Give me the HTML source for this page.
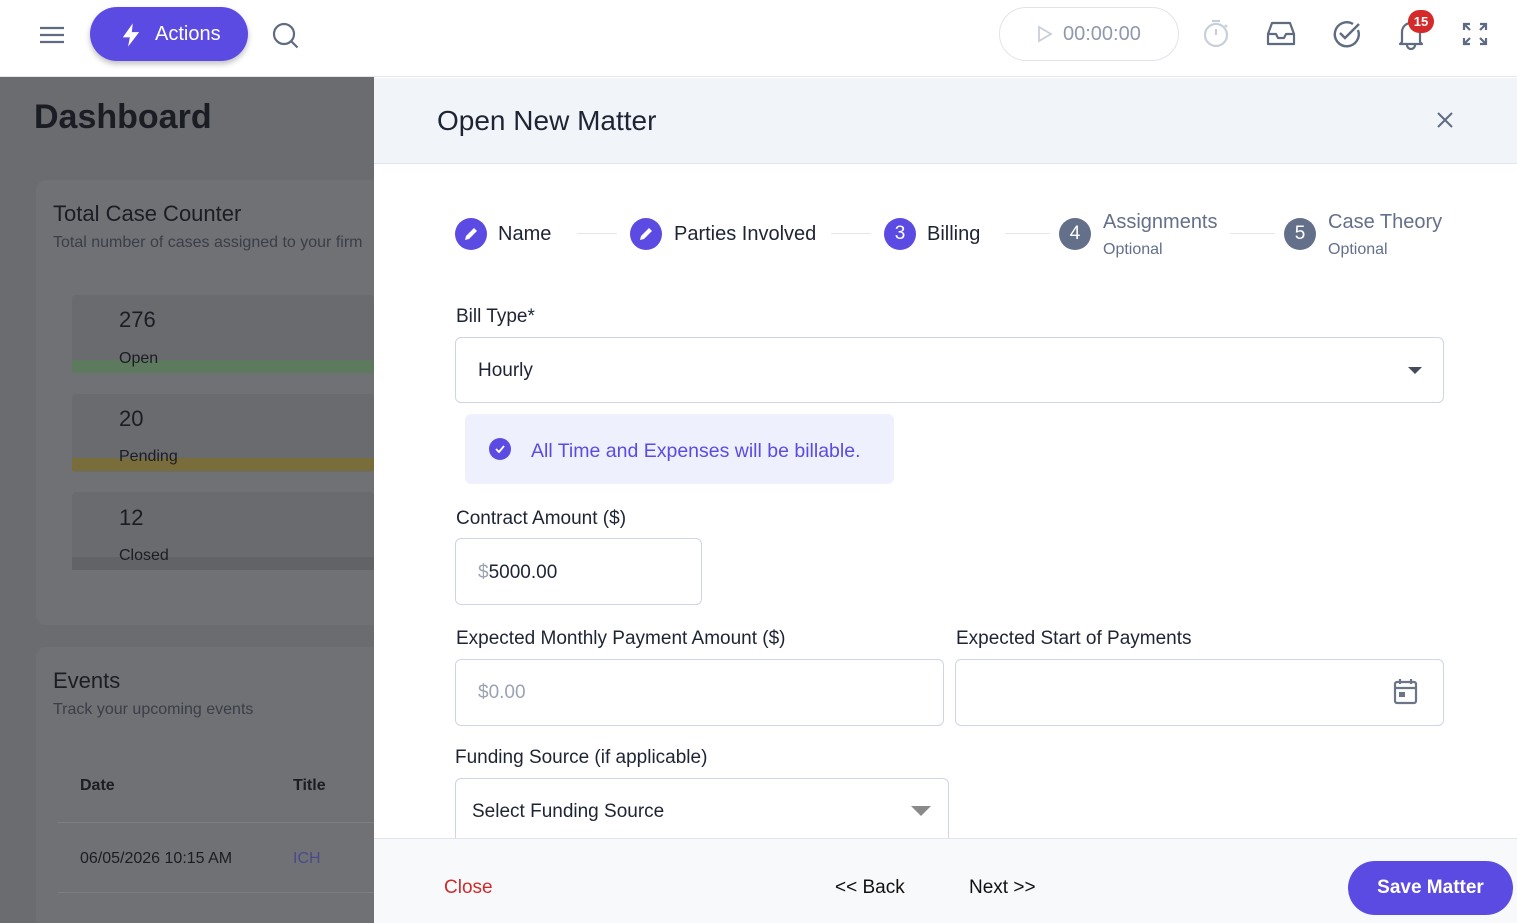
<!DOCTYPE html>
<html style="overflow:hidden;height:923px"><head><meta charset="utf-8"><style>
*{box-sizing:border-box;margin:0;padding:0}
body{width:1517px;height:923px;overflow:hidden;font-family:"Liberation Sans",sans-serif;background:#6b6c6f;position:relative;color:#1e2433}
.abs{position:absolute}
.t{margin-top:2px}
.top{left:0;top:0;width:1517px;height:77px;background:#fff;border-bottom:1px solid #e3e6ec}
.card{background:#707174;border-radius:10px}
.dim{color:#1a1d24}
.panel{left:374px;top:77px;width:1143px;height:846px;background:#fff}
.lbl{font-size:19px;color:#1e2433;margin-top:2px}
.inp{border:1px solid #cfd5e2;border-radius:6px;background:#fff}
.circ{width:32px;height:32px;border-radius:50%;background:#5b4be3;color:#fff;font-size:19px;text-align:center;line-height:32px}
.line{height:1px;background:#e3e6ec}
</style></head><body>
<div class="abs dim" style="left:34px;top:98px;font-size:34px;font-weight:bold">Dashboard</div>
<div class="abs card" style="left:36px;top:180px;width:360px;height:445px"></div>
<div class="abs dim t" style="left:53px;top:199px;font-size:22px">Total Case Counter</div>
<div class="abs t" style="left:53px;top:232px;font-size:16px;color:#3a3e48;white-space:nowrap;width:321px;overflow:hidden">Total number of cases assigned to your firm</div>
<div class="abs" style="left:72px;top:295px;width:302px;height:78px;background:#6a6b6e;border-radius:4px"></div>
<div class="abs" style="left:72px;top:360px;width:302px;height:13px;background:#5d7a5f"></div>
<div class="abs dim t" style="left:119px;top:305px;font-size:22px">276</div>
<div class="abs dim t" style="left:119px;top:348px;font-size:16px">Open</div>
<div class="abs" style="left:72px;top:394px;width:302px;height:78px;background:#6a6b6e;border-radius:4px"></div>
<div class="abs" style="left:72px;top:458px;width:302px;height:13px;background:#7a6d3c"></div>
<div class="abs dim t" style="left:119px;top:404px;font-size:22px">20</div>
<div class="abs dim t" style="left:119px;top:446px;font-size:16px">Pending</div>
<div class="abs" style="left:72px;top:492px;width:302px;height:78px;background:#6a6b6e;border-radius:4px"></div>
<div class="abs" style="left:72px;top:557px;width:302px;height:13px;background:#626366"></div>
<div class="abs dim t" style="left:119px;top:503px;font-size:22px">12</div>
<div class="abs dim t" style="left:119px;top:545px;font-size:16px">Closed</div>
<div class="abs card" style="left:36px;top:647px;width:360px;height:276px;border-radius:10px 10px 0 0"></div>
<div class="abs dim t" style="left:53px;top:666px;font-size:22px">Events</div>
<div class="abs t" style="left:53px;top:699px;font-size:16px;color:#3a3e48">Track your upcoming events</div>
<div class="abs dim t" style="left:80px;top:775px;font-size:16px;font-weight:bold">Date</div>
<div class="abs dim t" style="left:293px;top:775px;font-size:16px;font-weight:bold">Title</div>
<div class="abs" style="left:58px;top:822px;width:316px;height:1px;background:#7d7e82"></div>
<div class="abs dim t" style="left:80px;top:848px;font-size:16px">06/05/2026 10:15 AM</div>
<div class="abs t" style="left:293px;top:848px;font-size:16px;color:#4a4a8a">ICH</div>
<div class="abs" style="left:58px;top:892px;width:316px;height:1px;background:#7d7e82"></div>

<div class="abs top"></div>
<svg class="abs" style="left:38px;top:24px" width="28" height="22" viewBox="0 0 28 22"><path d="M2 4h24M2 11h24M2 18h24" stroke="#5f6b80" stroke-width="2.2"/></svg>
<div class="abs" style="left:90px;top:7px;width:158px;height:54px;border-radius:27px;background:#5b4be3;box-shadow:0 3px 6px rgba(0,0,0,.25);color:#fff;font-size:20px;line-height:54px;padding-left:65px">Actions</div>
<svg class="abs" style="left:117px;top:21px" width="28" height="28" viewBox="0 0 24 24"><path d="M13.5 2L5 14h6l-1.5 8L19 9.5h-6.3z" fill="#fff"/></svg>
<svg class="abs" style="left:270px;top:20px" width="30" height="30" viewBox="0 0 30 30"><circle cx="14" cy="14" r="10" fill="none" stroke="#5f6b80" stroke-width="2.2"/><path d="M21.5 21.5l6 6" stroke="#5f6b80" stroke-width="2.2"/></svg>
<div class="abs" style="left:999px;top:7px;width:180px;height:54px;border:1px solid #e1e4ec;border-radius:27px;color:#8f99ad;font-size:20px;line-height:52px;padding-left:63px">00:00:00</div>
<svg class="abs" style="left:1036px;top:25px" width="18" height="18" viewBox="0 0 18 18"><path d="M3 2l12 7-12 7z" fill="none" stroke="#c9cfda" stroke-width="1.8"/></svg>
<svg class="abs" style="left:1202px;top:18px" width="28" height="30" viewBox="0 0 28 30"><circle cx="14" cy="17" r="11" fill="none" stroke="#c9cfda" stroke-width="2.2"/><path d="M10 3h8M14 11v6M23 7l2 2" stroke="#c9cfda" stroke-width="2.2"/></svg>
<svg class="abs" style="left:1266px;top:20px" width="30" height="28" viewBox="0 0 30 28"><path d="M2 14L6 3h18l4 11v10H2zM2 14h8l2 4h6l2-4h8" fill="none" stroke="#5f6b80" stroke-width="2.2" stroke-linejoin="round"/></svg>
<svg class="abs" style="left:1331px;top:18px" width="32" height="32" viewBox="0 0 32 32"><path d="M27 12a12 12 0 1 1-5-6" fill="none" stroke="#5f6b80" stroke-width="2.4"/><path d="M9 15l5 5L28 6" fill="none" stroke="#5f6b80" stroke-width="2.4"/></svg>
<svg class="abs" style="left:1396px;top:18px" width="30" height="32" viewBox="0 0 30 32"><path d="M6 24V14a9 9 0 0 1 18 0v10l2 2H4zM11 27a4 4 0 0 0 8 0" fill="none" stroke="#5f6b80" stroke-width="2.2" stroke-linejoin="round"/></svg>
<div class="abs" style="left:1408px;top:10px;width:26px;height:23px;border-radius:12px;background:#d42a2a;color:#fff;font-size:13px;font-weight:bold;text-align:center;line-height:23px">15</div>
<svg class="abs" style="left:1462px;top:22px" width="26" height="24" viewBox="0 0 26 24"><path d="M2 8V2h6M2 2l6 6M18 2h6v6M24 2l-6 6M2 16v6h6M2 22l6-6M24 16v6h-6M24 22l-6-6" fill="none" stroke="#5f6b80" stroke-width="2.2"/></svg>

<div class="abs panel"></div>
<div class="abs" style="left:374px;top:78px;width:1143px;height:86px;background:#f1f4f9;border-bottom:1px solid #e3e6ec"></div>
<div class="abs t" style="left:437px;top:103px;font-size:28px;color:#1e2433">Open New Matter</div>
<svg class="abs" style="left:1436px;top:111px" width="18" height="18" viewBox="0 0 18 18"><path d="M2 2l14 14M16 2L2 16" stroke="#5f6b80" stroke-width="2"/></svg>

<div class="abs circ" style="left:455px;top:218px"><svg width="32" height="32" viewBox="0 0 32 32"><path d="M10 22l1-4 8-8 3 3-8 8z" fill="#fff"/></svg></div>
<div class="abs t" style="left:498px;top:221px;font-size:20px">Name</div>
<div class="abs line" style="left:577px;top:233px;width:40px"></div>
<div class="abs circ" style="left:630px;top:218px"><svg width="32" height="32" viewBox="0 0 32 32"><path d="M10 22l1-4 8-8 3 3-8 8z" fill="#fff"/></svg></div>
<div class="abs t" style="left:674px;top:221px;font-size:20px">Parties Involved</div>
<div class="abs line" style="left:831px;top:233px;width:40px"></div>
<div class="abs circ" style="left:884px;top:218px">3</div>
<div class="abs t" style="left:927px;top:221px;font-size:20px">Billing</div>
<div class="abs line" style="left:1005px;top:233px;width:45px"></div>
<div class="abs circ" style="left:1059px;top:218px;background:#64708a">4</div>
<div class="abs t" style="left:1103px;top:209px;font-size:20px;color:#64708a">Assignments</div>
<div class="abs t" style="left:1103px;top:239px;font-size:16px;color:#64708a">Optional</div>
<div class="abs line" style="left:1230px;top:233px;width:45px"></div>
<div class="abs circ" style="left:1284px;top:218px;background:#64708a">5</div>
<div class="abs t" style="left:1328px;top:209px;font-size:20px;color:#64708a">Case Theory</div>
<div class="abs t" style="left:1328px;top:239px;font-size:16px;color:#64708a">Optional</div>

<div class="abs lbl" style="left:456px;top:304px">Bill Type*</div>
<div class="abs inp" style="left:455px;top:337px;width:989px;height:66px"></div>
<div class="abs t" style="left:478px;top:358px;font-size:19px">Hourly</div>
<svg class="abs" style="left:1407px;top:366px" width="16" height="9"><path d="M1 1h14l-7 7z" fill="#454c5c"/></svg>

<div class="abs" style="left:465px;top:414px;width:429px;height:70px;background:#eef1fd;border-radius:6px"></div>
<svg class="abs" style="left:489px;top:438px" width="22" height="22" viewBox="0 0 22 22"><circle cx="11" cy="11" r="11" fill="#5b4be3"/><path d="M7 11l3 3 5-6" fill="none" stroke="#fff" stroke-width="1.8"/></svg>
<div class="abs t" style="left:531px;top:438px;font-size:19.5px;color:#5b4be3">All Time and Expenses will be billable.</div>

<div class="abs lbl" style="left:456px;top:506px">Contract Amount ($)</div>
<div class="abs inp" style="left:455px;top:538px;width:247px;height:67px"></div>
<div class="abs t" style="left:478px;top:560px;font-size:19px"><span style="color:#9aa3b4">$</span>5000.00</div>

<div class="abs lbl" style="left:456px;top:626px">Expected Monthly Payment Amount ($)</div>
<div class="abs inp" style="left:455px;top:659px;width:489px;height:67px"></div>
<div class="abs t" style="left:478px;top:680px;font-size:19px;color:#9aa3b4">$0.00</div>
<div class="abs lbl" style="left:956px;top:626px">Expected Start of Payments</div>
<div class="abs inp" style="left:955px;top:659px;width:489px;height:67px"></div>
<svg class="abs" style="left:1393px;top:677px" width="25" height="28" viewBox="0 0 25 28"><rect x="2" y="5" width="21" height="21" rx="2" fill="none" stroke="#6b7488" stroke-width="2.2"/><path d="M2 11h21M7 2v5M18 2v5" stroke="#6b7488" stroke-width="2.2"/><rect x="6" y="15" width="6" height="5" fill="#6b7488"/></svg>

<div class="abs lbl" style="left:455px;top:745px">Funding Source (if applicable)</div>
<div class="abs inp" style="left:455px;top:778px;width:494px;height:80px;border-radius:6px 6px 0 0"></div>
<div class="abs t" style="left:472px;top:799px;font-size:19px">Select Funding Source</div>
<svg class="abs" style="left:911px;top:806px" width="20" height="11"><path d="M0 0h20l-10 10z" fill="#8a8a8a"/></svg>

<div class="abs" style="left:374px;top:838px;width:1143px;height:85px;background:#f8f9fb;border-top:1px solid #e1e4ec"></div>
<div class="abs t" style="left:444px;top:875px;font-size:19px;color:#d02b2b">Close</div>
<div class="abs t" style="left:835px;top:875px;font-size:19px;color:#111">&lt;&lt; Back</div>
<div class="abs t" style="left:969px;top:875px;font-size:19px;color:#111">Next &gt;&gt;</div>
<div class="abs" style="left:1348px;top:861px;width:165px;height:54px;border-radius:27px;background:#5b4be3;color:#fff;font-size:19px;font-weight:bold;text-align:center;line-height:54px">Save Matter</div>
</body></html>
